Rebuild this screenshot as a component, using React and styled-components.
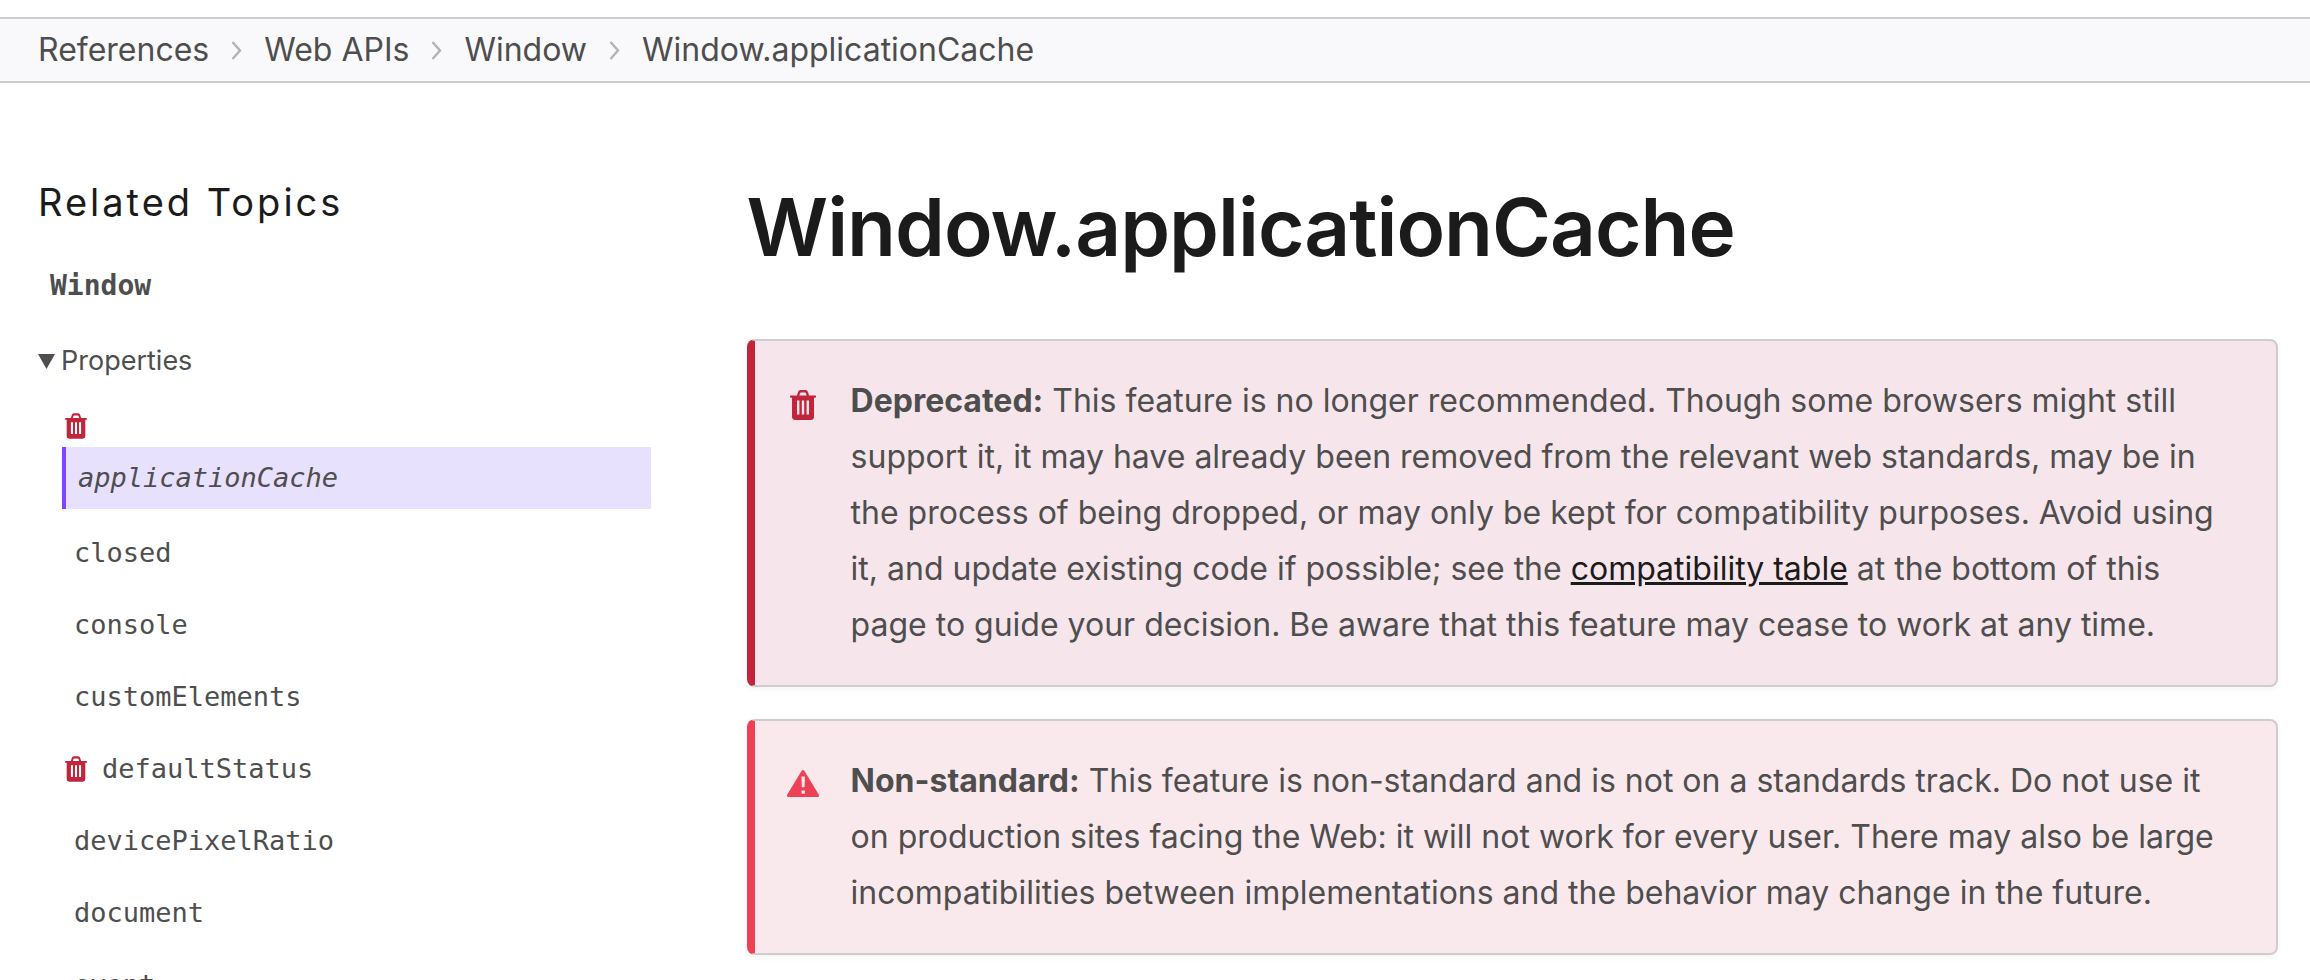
import React from "react";
import styled, { createGlobalStyle } from "styled-components";

const sans = `Inter, "Liberation Sans", sans-serif`;
const mono = `"DejaVu Sans Mono", monospace`;

const GlobalStyle = createGlobalStyle`
  *, *::before, *::after { box-sizing: border-box; }
  body { margin: 0; background: #fff; color: #4e4e4e; font-family: ${sans}; font-size: 32px; }
  a { color: inherit; text-decoration: none; }
`;

const Breadcrumbs = styled.nav`
  margin-top: 17px;
  padding: 0 38px;
  background: #f9f9fb;
  border-top: 2px solid #cdcdcd;
  border-bottom: 2px solid #cdcdcd;
`;

const CrumbList = styled.ol`
  display: flex;
  align-items: center;
  gap: 22px;
  margin: 0;
  padding: 0;
  list-style: none;
  line-height: 62px;
`;

const Crumb = styled.li`
  display: flex;
  align-items: center;
  gap: 22px;
`;

const Layout = styled.div`
  display: grid;
  grid-template-columns: minmax(0, 2fr) minmax(0, 5fr);
  gap: 96px;
  padding: 88px 32px 0 38px;
`;

const Sidebar = styled.aside`
  min-width: 0;
`;

const SidebarTitle = styled.h2`
  margin: 0;
  color: #1b1b1b;
  font-size: 38px;
  font-weight: 400;
  line-height: 62px;
  letter-spacing: 3px;
`;

const InterfaceLink = styled.a`
  display: block;
  margin-top: 22px;
  padding: 0 12px;
  font-family: ${mono};
  font-size: 28px;
  font-weight: 700;
  line-height: 62px;
`;

const Group = styled.details`
  margin-top: 13px;
`;

const GroupTitle = styled.summary`
  display: flex;
  align-items: center;
  gap: 6px;
  font-size: 27px;
  line-height: 62px;
  list-style: none;
  &::-webkit-details-marker { display: none; }
`;

const PropertyList = styled.ul`
  display: flex;
  flex-direction: column;
  gap: 12px;
  margin: 0;
  padding: 21px 0 0 24px;
  list-style: none;
  font-family: ${mono};
  font-size: 27px;
  line-height: 60px;
`;

const Property = styled.li`
  display: ${(p) => (p.$current ? "block" : "flex")};
  align-items: center;
  & > svg { display: block; margin: 0 3px; }
`;

const PropertyLink = styled.a`
  padding: 0 12px;
  &[aria-current="page"] {
    display: block;
    margin: 8px 0 2px;
    line-height: 62px;
    border-left: 4px solid #8045ff;
    background: #e8e1fd;
    font-style: italic;
  }
`;

const Main = styled.main`
  min-width: 0;
`;

const Title = styled.h1`
  margin: 0;
  padding-bottom: 24px;
  color: #1b1b1b;
  font-size: 80px;
  font-weight: 600;
  line-height: 112px;
  letter-spacing: -1px;
`;

const Notice = styled.section`
  display: flex;
  gap: 32px;
  margin-top: 32px;
  padding: 32px 56px 32px 32px;
  border: 2px solid #cdcdcd;
  border-left: 8px solid ${(p) => p.$accent};
  border-radius: 8px;
  background: ${(p) => p.$background};
  box-shadow: 0 2px 6px rgba(0, 0, 0, 0.05);
`;

const NoticeIcon = styled.div`
  display: flex;
  flex: 0 0 32px;
  justify-content: center;
  padding-top: 17px;
`;

const NoticeText = styled.p`
  margin: 0;
  line-height: 56px;
  a { color: #1b1b1b; text-decoration: underline; }
`;

const Chevron = () => (
  <svg width="11" height="19" viewBox="0 0 11 19" fill="none" stroke="#b3b3b3" strokeWidth="2.4" aria-hidden="true">
    <path d="M1.500 1l7.500 8.500-7.500 8.500" />
  </svg>
);

const Triangle = () => (
  <svg width="17" height="15" viewBox="0 0 17 15" fill="#4e4e4e" aria-hidden="true">
    <path d="M0 0h17L8.500 15z" />
  </svg>
);

const Trash = ({ width, height }) => (
  <svg width={width} height={height} viewBox="0 0 26 30" fill="#c1253c" aria-hidden="true">
    <path
      fillRule="evenodd"
      d="M7 5.500L8 2Q8.600 0 10.500 0h5Q17.400 0 18 2l1 3.500h6.200q.8 0 .8.800v.6q0 .8-.8.800H24V26.500Q24 30 20.500 30h-15Q2 30 2 26.500V7.700H.8Q0 7.700 0 6.900v-.6q0-.8.800-.8zM9.300 5.500h7.400l-.7-2.300q-.2-.7-1-.7h-4q-.8 0-1 .7zM7 10.500v14h2.400v-14zM11.800 10.500v14h2.400v-14zM16.600 10.500v14H19v-14z"
    />
  </svg>
);

const Warning = () => (
  <svg width="32" height="27" viewBox="0 0 32 27" fill="#ed4256" aria-hidden="true">
    <path
      fillRule="evenodd"
      d="M14.500 1q1.500-2 3 0l14.200 23.500q1 2.500-1.200 2.500h-29Q-.7 27 .3 24.500zM14.500 6.500l.3 10.800h2.800l.3-10.800zM14.500 20.600v3.200H17.900v-3.200z"
    />
  </svg>
);

const crumbs = ["References", "Web APIs", "Window", "Window.applicationCache"];

const properties = [
  { name: "applicationCache", deprecated: true, current: true },
  { name: "closed" },
  { name: "console" },
  { name: "customElements" },
  { name: "defaultStatus", deprecated: true },
  { name: "devicePixelRatio" },
  { name: "document" },
  { name: "event" },
];

const Page = styled.div`
  height: 100vh;
  overflow: hidden;
  display: flow-root;
`;

export default function App() {
  return (
    <Page>
      <GlobalStyle />
      <Breadcrumbs aria-label="Breadcrumb">
        <CrumbList>
          {crumbs.map((name, i) => (
            <Crumb key={name}>
              {i > 0 && <Chevron />}
              <a href="#">{name}</a>
            </Crumb>
          ))}
        </CrumbList>
      </Breadcrumbs>
      <Layout>
        <Sidebar>
          <SidebarTitle>Related Topics</SidebarTitle>
          <InterfaceLink href="#">Window</InterfaceLink>
          <Group open>
            <GroupTitle>
              <Triangle />
              Properties
            </GroupTitle>
            <PropertyList>
              {properties.map((p) => (
                <Property key={p.name} $current={p.current}>
                  {p.deprecated && <Trash width={22} height={26} />}
                  <PropertyLink href="#" aria-current={p.current ? "page" : undefined}>
                    {p.name}
                  </PropertyLink>
                </Property>
              ))}
            </PropertyList>
          </Group>
        </Sidebar>
        <Main>
          <Title>Window.applicationCache</Title>
          <Notice $accent="#c1253c" $background="#f6e6eb">
            <NoticeIcon>
              <Trash width={26} height={30} />
            </NoticeIcon>
            <NoticeText>
              <strong>Deprecated:</strong> This feature is no longer recommended. Though some browsers might still
              support it, it may have already been removed from the relevant web standards, may be in the process of
              being dropped, or may only be kept for compatibility purposes. Avoid using it, and update existing code
              if possible; see the <a href="#compat">compatibility table</a> at the bottom of this page to guide your
              decision. Be aware that this feature may cease to work at any time.
            </NoticeText>
          </Notice>
          <Notice $accent="#ed4256" $background="#fae9ec">
            <NoticeIcon>
              <Warning />
            </NoticeIcon>
            <NoticeText>
              <strong>Non-standard:</strong> This feature is non-standard and is not on a standards track. Do not use
              it on production sites facing the Web: it will not work for every user. There may also be large
              incompatibilities between implementations and the behavior may change in the future.
            </NoticeText>
          </Notice>
        </Main>
      </Layout>
    </Page>
  );
}
